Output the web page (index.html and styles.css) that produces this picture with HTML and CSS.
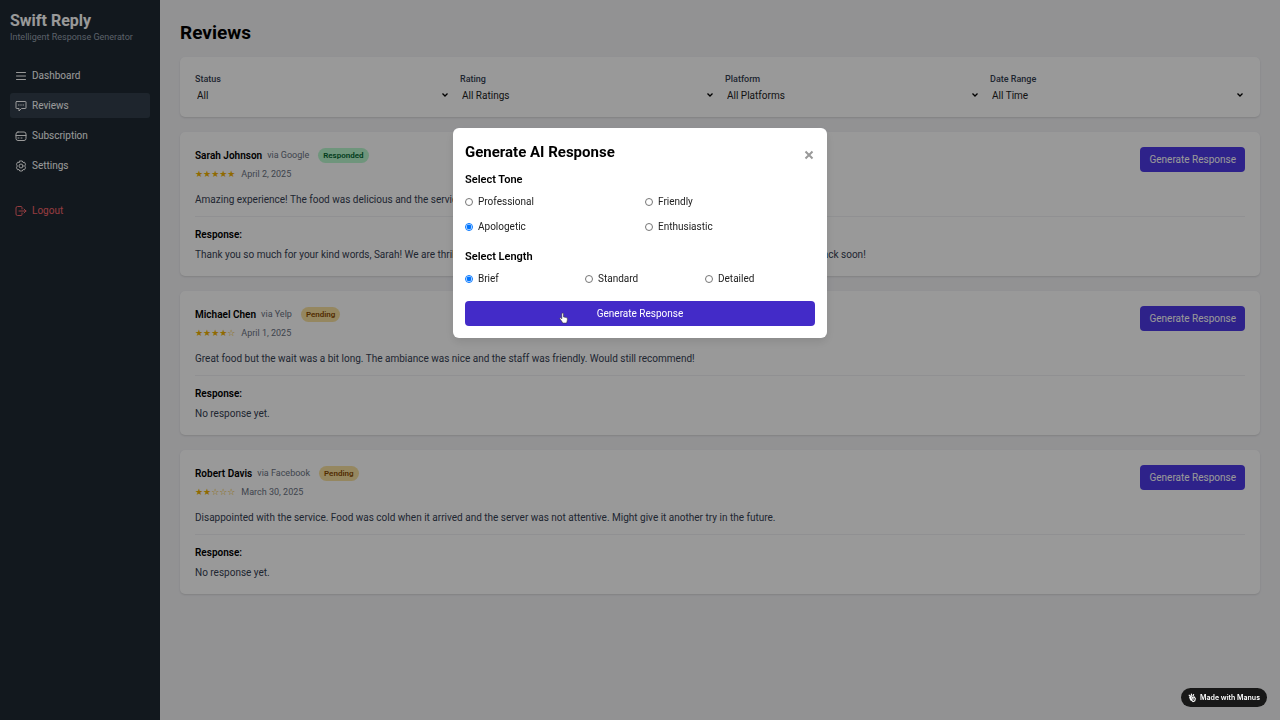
FILE: index.html
```html
<!DOCTYPE html>
<html lang="en">
<head>
<meta charset="utf-8">
<meta name="viewport" content="width=device-width, initial-scale=1">
<title>Swift Reply - Reviews</title>
<link rel="stylesheet" href="styles.css">
</head>
<body>
<div class="app">
  <aside class="sidebar">
    <div class="brand">
      <div class="brand-name">Swift Reply</div>
      <div class="brand-sub">Intelligent Response Generator</div>
    </div>
    <nav class="nav">
      <a class="nav-item" href="#dashboard"><svg class="icon" viewBox="0 0 24 24"><path d="M3 5h18M3 12h18M3 19h18"/></svg>Dashboard</a>
      <a class="nav-item active" href="#reviews"><svg class="icon" viewBox="0 0 24 24"><path d="M3 3h18a1 1 0 0 1 1 1v12a1 1 0 0 1-1 1h-8l-5 5v-5H3a1 1 0 0 1-1-1V4a1 1 0 0 1 1-1zM7 10h1M11.500 10h1M16 10h1"/></svg>Reviews</a>
      <a class="nav-item" href="#subscription"><svg class="icon" viewBox="0 0 24 24"><rect x="2" y="4" width="20" height="17" rx="4"/><path d="M2 11h20M6 16h2M12 16h2"/></svg>Subscription</a>
      <a class="nav-item" href="#settings"><svg class="icon" viewBox="0 0 24 24"><path d="M9.500 2h5l1.500 3 3-.5 2 4-1.500 3.500 1.500 3.500-2 4-3-.5-1.500 3h-5L8 19l-3 .5-2-4L4.500 12 3 8.500l2-4L8 5z"/><circle cx="12" cy="12" r="4"/></svg>Settings</a>
      <a class="nav-item logout" href="#logout"><svg class="icon" viewBox="0 0 24 24"><path d="M14 8V5a2 2 0 0 0-2-2H5a3 3 0 0 0-3 3v12a3 3 0 0 0 3 3h7a2 2 0 0 0 2-2v-3M8 12h14M18 8l4 4-4 4"/></svg>Logout</a>
    </nav>
  </aside>
  <main class="main">
    <h1 class="page-title">Reviews</h1>
    <form class="card filters">
      <div class="filter"><label for="status">Status</label><select id="status"><option>All</option></select></div>
      <div class="filter"><label for="rating">Rating</label><select id="rating"><option>All Ratings</option></select></div>
      <div class="filter"><label for="platform">Platform</label><select id="platform"><option>All Platforms</option></select></div>
      <div class="filter"><label for="range">Date Range</label><select id="range"><option>All Time</option></select></div>
    </form>
    <article class="card review">
      <div class="review-head">
        <div>
          <div class="who"><h2 class="name">Sarah Johnson</h2><span class="via">via Google</span><span class="badge done">Responded</span></div>
          <div class="meta"><span class="stars">★★★★★</span><span>April 2, 2025</span></div>
        </div>
        <button class="btn" type="button">Generate Response</button>
      </div>
      <p class="text">Amazing experience! The food was delicious and the service was excellent.</p>
      <div class="response"><h3 class="response-title">Response:</h3><p class="text">Thank you so much for your kind words, Sarah! We are thrilled that you enjoyed both the food and our service. We look forward to having you back soon!</p></div>
    </article>
    <article class="card review">
      <div class="review-head">
        <div>
          <div class="who"><h2 class="name">Michael Chen</h2><span class="via">via Yelp</span><span class="badge pending">Pending</span></div>
          <div class="meta"><span class="stars">★★★★☆</span><span>April 1, 2025</span></div>
        </div>
        <button class="btn" type="button">Generate Response</button>
      </div>
      <p class="text">Great food but the wait was a bit long. The ambiance was nice and the staff was friendly. Would still recommend!</p>
      <div class="response"><h3 class="response-title">Response:</h3><p class="text">No response yet.</p></div>
    </article>
    <article class="card review">
      <div class="review-head">
        <div>
          <div class="who"><h2 class="name">Robert Davis</h2><span class="via">via Facebook</span><span class="badge pending">Pending</span></div>
          <div class="meta"><span class="stars">★★☆☆☆</span><span>March 30, 2025</span></div>
        </div>
        <button class="btn" type="button">Generate Response</button>
      </div>
      <p class="text">Disappointed with the service. Food was cold when it arrived and the server was not attentive. Might give it another try in the future.</p>
      <div class="response"><h3 class="response-title">Response:</h3><p class="text">No response yet.</p></div>
    </article>
  </main>
</div>

<div class="overlay">
  <section class="modal" role="dialog" aria-modal="true" aria-labelledby="modal-title">
    <header class="modal-head">
      <h2 class="modal-title" id="modal-title">Generate AI Response</h2>
      <button class="close" type="button" aria-label="Close"><svg class="close-icon" viewBox="0 0 10 10"><path d="M1.500 1.500l7 7M8.500 1.500l-7 7"/></svg></button>
    </header>
    <fieldset class="group">
      <legend>Select Tone</legend>
      <div class="options two">
        <label class="option"><input type="radio" name="tone">Professional</label>
        <label class="option"><input type="radio" name="tone">Friendly</label>
        <label class="option"><input type="radio" name="tone" checked>Apologetic</label>
        <label class="option"><input type="radio" name="tone">Enthusiastic</label>
      </div>
    </fieldset>
    <fieldset class="group">
      <legend>Select Length</legend>
      <div class="options three">
        <label class="option"><input type="radio" name="length" checked>Brief</label>
        <label class="option"><input type="radio" name="length">Standard</label>
        <label class="option"><input type="radio" name="length">Detailed</label>
      </div>
    </fieldset>
    <div class="submit">
      <button class="btn wide" type="button">Generate Response</button>
      <svg class="pointer" viewBox="0 0 16 20"><path d="M5 2.500C5 .8 8 .8 8 2.500V8l5 1.200c1.500.4 2 1.300 2 2.800 0 3-1 4-1.500 7H6.500C6 16.500 3 14 1.500 11.500.8 10 2.500 9 3.800 10.200L5 11.500z"/></svg>
    </div>
  </section>
</div>

<a class="manus" href="#manus"><svg class="manus-icon" viewBox="0 0 16 16"><path d="M3 6.500l3-1 2 1.500 3-1 2 3-1 4-3 1.500-2-2-2-1-1-2zM2 3l2 1M6 1l.5 2.500M10 2L9 4M8 8l1.500 2M5 8l2 3"/></svg>Made with Manus</a>
</body>
</html>
```
FILE: styles.css
```css
* { box-sizing: border-box; margin: 0; }
body {
  font: 10px/15px Roboto, "Open Sans", sans-serif;
  color: #000;
  background: #f3f3f6;
}
button, select { font: inherit; }
a { color: inherit; text-decoration: none; }
h1, h2, h3 { font-size: inherit; }

.app { display: flex; min-height: 100vh; }

.sidebar { flex: 0 0 160px; padding: 10px; background: #1e2933; color: #fff; }
.brand-name { font-size: 16px; line-height: 21px; font-weight: 700; }
.brand-sub { font-size: 9px; line-height: 13px; color: #99a1af; white-space: nowrap; }
.nav { display: flex; flex-direction: column; gap: 5px; margin-top: 19px; }
.nav-item { display: flex; align-items: center; gap: 5px; height: 25px; padding: 0 5px; border-radius: 3px; }
.nav-item.active { background: #333f4c; }
.logout { margin-top: 15px; color: #f8646c; }
.icon { width: 12px; height: 12px; fill: none; stroke: currentColor; stroke-width: 2; stroke-linecap: round; stroke-linejoin: round; }

.main { flex: 1; padding: 20px; }
.page-title { font-size: 19px; line-height: 25px; margin-bottom: 12px; }
.card { background: #fff; border-radius: 5px; padding: 15px 15px 14px; box-shadow: 0 1px 2px rgba(0, 0, 0, .12); margin-bottom: 15px; }

.filters { display: grid; grid-template-columns: repeat(4, 1fr); gap: 10px; }
.filter label { display: block; font-size: 9px; line-height: 15px; font-weight: 500; color: #364153; }
.filter select {
  display: block; width: 100%; height: 16px; padding: 0 2px; border: 0;
  appearance: none; color: #222;
  background: url("data:image/svg+xml,%3Csvg xmlns='http://www.w3.org/2000/svg' viewBox='0 0 8 6'%3E%3Cpath d='M1.500 1.500L4 4l2.500-2.500' fill='none' stroke='%23000' stroke-width='1.300'/%3E%3C/svg%3E") no-repeat right 1px center / 8px 6px;
}

.review-head { display: flex; justify-content: space-between; align-items: flex-start; }
.who { display: flex; align-items: center; height: 16px; }
.name { font-weight: 600; }
.via { font-size: 9px; color: #6a7282; margin-left: 5px; }
.badge { margin-left: 9px; padding: 0 5px; border-radius: 8px; font-size: 8px; line-height: 15px; font-weight: 600; }
.done { background: #b9f8cf; color: #016630; }
.pending { background: #f8e2a0; color: #894b00; }
.meta { display: flex; align-items: center; gap: 6px; margin-top: 4px; font-size: 9px; line-height: 14px; color: #6a7282; }
.stars { color: #f0b100; font-family: "DejaVu Sans", sans-serif; }
.text { color: #364153; }
.review-head + .text { margin-top: 11px; }
.response { margin-top: 9px; padding-top: 10px; border-top: 1px solid #f0f1f3; }
.response-title { font-weight: 600; margin-bottom: 5px; }

.btn { height: 25px; padding: 0 9px; border: 0; border-radius: 4px; background: #4d39e6; color: #fff; cursor: pointer; white-space: nowrap; }
.wide { display: block; width: 100%; background: #432bc8; }

.overlay { position: fixed; inset: 0; display: flex; justify-content: center; align-items: flex-start; padding: 128px 16px 16px; background: rgba(0, 0, 0, .4); }
.modal { width: 374px; padding: 12px; border-radius: 6px; background: #fff; box-shadow: 0 4px 10px rgba(0, 0, 0, .1); }
.modal-head { display: flex; justify-content: space-between; align-items: flex-end; height: 24px; margin-bottom: 8px; }
.modal-title { font-size: 15px; line-height: 24px; align-self: flex-start; }
.close { display: grid; place-items: center; width: 13px; height: 18px; padding: 0; border: 0; background: none; color: #999; }
.close-icon { width: 10px; height: 10px; fill: none; stroke: currentColor; stroke-width: 2; }
.group { border: 0; padding: 0; margin-bottom: 15px; }
.group legend { padding: 0; font-size: 11px; line-height: 15px; font-weight: 600; }
.options { display: grid; gap: 10px; margin-top: 7px; }
.two { grid-template-columns: repeat(2, 1fr); }
.three { grid-template-columns: repeat(3, 1fr); }
.option { display: flex; align-items: center; gap: 5px; color: #222; }
.option input { width: 8px; height: 8px; margin: 0; }
.submit { position: relative; }
.pointer { position: absolute; left: 94px; top: 11px; width: 9px; height: 12px; fill: #fff; stroke: #333; stroke-width: 1; }

.manus { position: fixed; right: 13px; bottom: 13px; display: flex; align-items: center; gap: 3px; height: 19px; padding: 0 7px; border-radius: 10px; background: #181818; color: #fff; font-family: Inter, sans-serif; font-size: 7px; font-weight: 600; }
.manus-icon { width: 9px; height: 10px; fill: none; stroke: currentColor; stroke-width: 2; stroke-linecap: round; }
```
